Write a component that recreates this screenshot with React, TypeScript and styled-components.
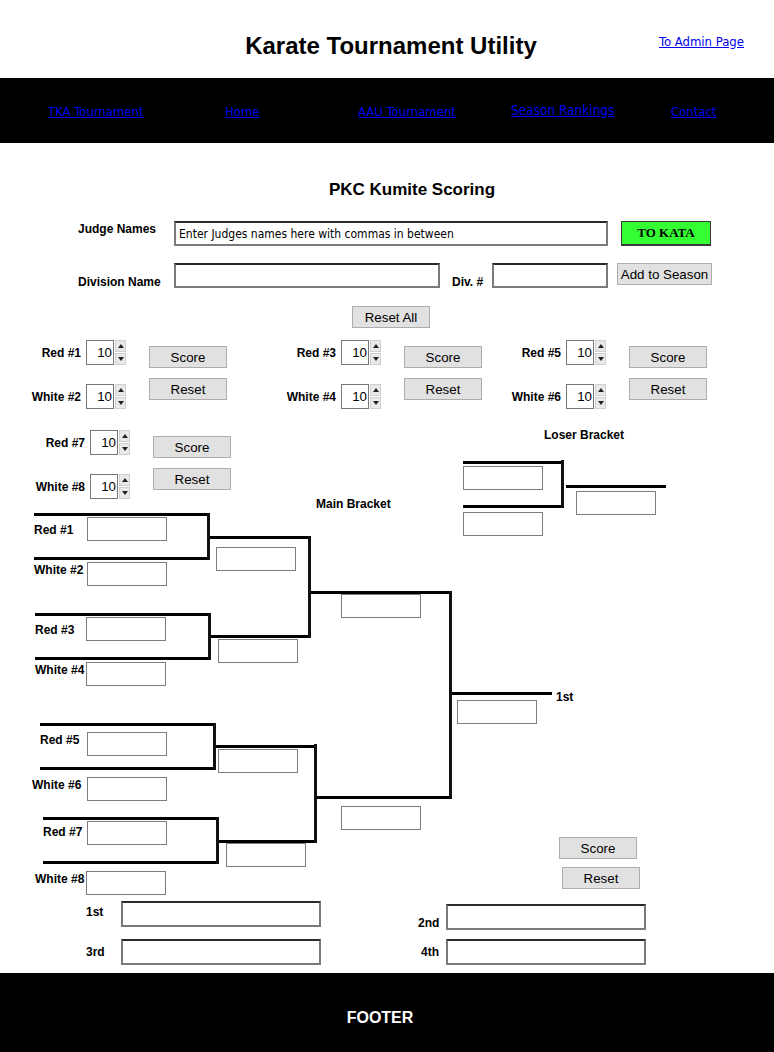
import styled, { createGlobalStyle } from "styled-components";

const GlobalStyle = createGlobalStyle`
  body {
    margin: 0;
    background: #fff;
    font-family: "Liberation Sans", Arial, sans-serif;
    color: #000;
  }
`;

const comic = `"Comic Sans MS", "Liberation Sans Narrow", "DejaVu Sans Condensed", sans-serif`;

// bracket geometry, in canvas coordinates
const hLines = [
  [463, 563, 42], [463, 563, 86], [566, 666, 66],
  [34, 208, 94], [34, 208, 138], [35, 209, 194], [35, 209, 238],
  [40, 214, 304], [40, 214, 348], [43, 217, 398], [43, 217, 442],
  [208, 309, 117], [209, 309, 216], [214, 316, 326], [217, 316, 421],
  [310, 450, 172], [316, 450, 377],
  [452, 552, 273],
];

const vLines = [
  [562, 41, 87], [208, 94, 139], [209, 194, 239], [214, 304, 349],
  [217, 398, 443], [309, 117, 217], [315, 325, 422], [450, 172, 378],
];

const slots = [
  [463, 46], [463, 92], [576, 71],
  [87, 97], [87, 142], [86, 197], [86, 242], [87, 312], [87, 357], [87, 401], [86, 451],
  [216, 127], [218, 219], [218, 329], [226, 423],
  [341, 174], [341, 386],
  [457, 280],
];

const labels: [string, number, number][] = [
  ["Loser Bracket", 544, 8],
  ["Main Bracket", 316, 77],
  ["Red #1", 34, 103],
  ["White #2", 34, 143],
  ["Red #3", 35, 203],
  ["White #4", 35, 243],
  ["Red #5", 40, 313],
  ["White #6", 32, 358],
  ["Red #7", 43, 405],
  ["White #8", 35, 452],
  ["1st", 556, 270],
];

const scoreGroups = [
  ["Red #1", "White #2"],
  ["Red #3", "White #4"],
  ["Red #5", "White #6"],
];

function Spinner() {
  return (
    <SpinBox>
      <SpinValue>10</SpinValue>
      <SpinArrows>
        <Arrow $dir="up" />
        <Arrow $dir="down" />
      </SpinArrows>
    </SpinBox>
  );
}

function ScoreGroup({ names, left = 0 }: { names: string[]; left?: number }) {
  return (
    <Group $left={left}>
      <SpinnerList>
        {names.map((n) => (
          <SpinnerRow key={n}>
            <CompetitorLabel>{n}</CompetitorLabel>
            <Spinner />
          </SpinnerRow>
        ))}
      </SpinnerList>
      <ButtonStack>
        <GrayButton $width={78}>Score</GrayButton>
        <GrayButton $width={78}>Reset</GrayButton>
      </ButtonStack>
    </Group>
  );
}

export default function App() {
  return (
    <>
      <GlobalStyle />
      <Header>
        <span />
        <Title>Karate Tournament Utility</Title>
        <AdminLink href="#">To Admin Page</AdminLink>
      </Header>
      <Nav>
        <NavLink href="#">TKA Tournament</NavLink>
        <NavLink href="#">Home</NavLink>
        <NavLink href="#">AAU Tournament</NavLink>
        <NavLink href="#" $big>Season Rankings</NavLink>
        <NavLink href="#">Contact</NavLink>
      </Nav>

      <Main>
        <FormTitle>PKC Kumite Scoring</FormTitle>

        <FormRow $align="flex-start">
          <FieldLabel $width={96} $shift={-1}>Judge Names</FieldLabel>
          <TextField $width={434} defaultValue="Enter Judges names here with commas in between" />
          <KataButton>TO KATA</KataButton>
        </FormRow>

        <FormRow $align="flex-end" $top={17}>
          <FieldLabel $width={96} $shift={1}>Division Name</FieldLabel>
          <TextField $width={266} />
          <FieldLabel $width={40} $shift={1} $gap={12}>Div. #</FieldLabel>
          <TextField $width={116} />
          <AddButton>Add to Season</AddButton>
        </FormRow>

        <ResetRow>
          <GrayButton $width={78}>Reset All</GrayButton>
        </ResetRow>

        <ScoreRow>
          {scoreGroups.map((g) => (
            <ScoreGroup key={g[0]} names={g} />
          ))}
        </ScoreRow>

        <BracketCanvas>
          <ScoreGroup names={["Red #7", "White #8"]} left={30} />
          {hLines.map(([x1, x2, y], i) => (
            <HLine key={"h" + i} $x={x1} $y={y - 1} $w={x2 - x1} />
          ))}
          {vLines.map(([x, y1, y2], i) => (
            <VLine key={"v" + i} $x={x - 1} $y={y1 - 1} $h={y2 - y1 + 2} />
          ))}
          {slots.map(([x, y], i) => (
            <Slot key={"s" + i} $x={x} $y={y} />
          ))}
          {labels.map(([t, x, y]) => (
            <BracketLabel key={t + x} $x={x} $y={y}>{t}</BracketLabel>
          ))}
          <CanvasButton $x={559} $y={417}>Score</CanvasButton>
          <CanvasButton $x={562} $y={447}>Reset</CanvasButton>
        </BracketCanvas>

        <Placements>
          <PlaceColumn $gap={12}>
            <PlaceRow $align="flex-start">
              <PlaceLabel $width={35} $top={4}>1st</PlaceLabel>
              <TextField $width={200} $height={26} />
            </PlaceRow>
            <PlaceRow $align="center">
              <PlaceLabel $width={35}>3rd</PlaceLabel>
              <TextField $width={200} $height={26} />
            </PlaceRow>
          </PlaceColumn>
          <PlaceColumn $gap={9} $top={3}>
            <PlaceRow $align="flex-end">
              <PlaceLabel $width={28}>2nd</PlaceLabel>
              <TextField $width={200} $height={26} />
            </PlaceRow>
            <PlaceRow $align="center">
              <PlaceLabel $width={28} $left={3}>4th</PlaceLabel>
              <TextField $width={200} $height={26} />
            </PlaceRow>
          </PlaceColumn>
        </Placements>
      </Main>

      <Footer>FOOTER</Footer>
    </>
  );
}

/* header + nav */
const Header = styled.header`
  height: 78px;
  display: grid;
  grid-template-columns: 1fr auto 1fr;
  align-items: start;
  padding-top: 30px;
  box-sizing: border-box;
`;

const Title = styled.h1`
  margin: 0 0 0 8px;
  font-size: 24px;
  line-height: 32px;
  font-weight: bold;
`;

const AdminLink = styled.a`
  justify-self: end;
  margin: 4px 30px 0 0;
  font-family: ${comic};
  font-size: 13px;
  line-height: 16px;
  color: #0000ee;
`;

const Nav = styled.nav`
  height: 65px;
  background: #000;
  display: grid;
  grid-template-columns: 177px 133px 153px 160px auto;
  align-items: center;
  padding-left: 48px;
  box-sizing: border-box;
`;

const NavLink = styled.a<{ $big?: boolean }>`
  justify-self: start;
  font-family: ${comic};
  font-size: ${(p) => (p.$big ? "13.5px" : "13px")};
  margin-top: ${(p) => (p.$big ? "-1px" : "1px")};
  color: #0000ee;
`;

/* form */
const Main = styled.main`
  display: flex;
  flex-direction: column;
`;

const FormTitle = styled.h2`
  margin: 38px 0 0 50px;
  text-align: center;
  font-size: 17px;
  line-height: 18px;
  font-weight: bold;
`;

const FormRow = styled.div<{ $align: string; $top?: number }>`
  display: flex;
  align-items: ${(p) => p.$align};
  padding-left: 78px;
  margin-top: ${(p) => p.$top ?? 22}px;
  height: 25px;
`;

const FieldLabel = styled.span<{ $width: number; $shift: number; $gap?: number }>`
  width: ${(p) => p.$width}px;
  margin-left: ${(p) => p.$gap ?? 0}px;
  font-size: 12px;
  font-weight: bold;
  line-height: 14px;
  white-space: nowrap;
  position: relative;
  top: ${(p) => p.$shift}px;
  padding-top: ${(p) => (p.$shift < 0 ? 2 : 0)}px;
`;

const TextField = styled.input<{ $width: number; $height?: number }>`
  box-sizing: border-box;
  width: ${(p) => p.$width}px;
  height: ${(p) => p.$height ?? 25}px;
  border: 2px solid;
  border-color: #2a2a2a #7a7a7a #7a7a7a #7a7a7a;
  padding: 0 3px;
  font-family: ${comic};
  font-size: 12px;
  color: #000;
  background: #fff;
  outline: none;
`;

const KataButton = styled.button`
  box-sizing: border-box;
  width: 90px;
  height: 25px;
  margin-left: 13px;
  background: #33ff33;
  border: 1px solid #3a3a3a;
  border-bottom-width: 2px;
  font-family: "Liberation Serif", "Times New Roman", serif;
  font-weight: bold;
  font-size: 13px;
  color: #000;
  padding: 0;
`;

const GrayButton = styled.button<{ $width: number }>`
  box-sizing: border-box;
  width: ${(p) => p.$width}px;
  height: 22px;
  padding: 0;
  background: #e1e1e1;
  border: 1px solid #adadad;
  font-family: "Liberation Sans", Arial, sans-serif;
  font-size: 13.33px;
  color: #000;
`;

const AddButton = styled(GrayButton).attrs({ $width: 95 })`
  margin-left: 9px;
  align-self: flex-start;
`;

const ResetRow = styled.div`
  display: flex;
  justify-content: center;
  padding-left: 8px;
  margin-top: 18px;
`;

/* score controls */
const ScoreRow = styled.div`
  display: grid;
  grid-template-columns: 255px 225px auto;
  padding-left: 26px;
  margin-top: 12px;
  height: 69px;
`;

const Group = styled.div<{ $left: number }>`
  display: flex;
  gap: 23px;
  margin-left: ${(p) => p.$left}px;
`;

const SpinnerList = styled.div`
  display: flex;
  flex-direction: column;
  gap: 19px;
`;

const SpinnerRow = styled.div`
  display: flex;
  align-items: center;
`;

const CompetitorLabel = styled.span`
  width: 60px;
  padding-right: 5px;
  box-sizing: border-box;
  text-align: right;
  font-size: 12px;
  font-weight: bold;
  white-space: nowrap;
`;

const SpinBox = styled.div`
  display: flex;
  height: 25px;
`;

const SpinValue = styled.div`
  box-sizing: border-box;
  width: 28px;
  height: 25px;
  border: 1px solid #767676;
  text-align: right;
  padding-right: 1px;
  font-size: 13.33px;
  line-height: 23px;
`;

const SpinArrows = styled.div`
  display: flex;
  flex-direction: column;
  width: 11px;
  margin-left: 1px;
  gap: 1px;
`;

const Arrow = styled.div<{ $dir: "up" | "down" }>`
  flex: 1;
  background: #e9e9e9;
  border: 1px solid #cfcfcf;
  display: flex;
  align-items: center;
  justify-content: center;
  &::after {
    content: "";
    border-left: 3px solid transparent;
    border-right: 3px solid transparent;
    ${(p) => (p.$dir === "up" ? "border-bottom: 4px solid #222;" : "border-top: 4px solid #222;")}
  }
`;

const ButtonStack = styled.div`
  display: flex;
  flex-direction: column;
  gap: 10px;
  margin-top: 6px;
`;

/* bracket diagram */
const BracketCanvas = styled.div`
  position: relative;
  height: 478px;
  margin-top: 11px;
  padding-top: 10px;
  box-sizing: border-box;
`;

const HLine = styled.div<{ $x: number; $y: number; $w: number }>`
  position: absolute;
  left: ${(p) => p.$x}px;
  top: ${(p) => p.$y}px;
  width: ${(p) => p.$w}px;
  height: 3px;
  background: #000;
`;

const VLine = styled.div<{ $x: number; $y: number; $h: number }>`
  position: absolute;
  left: ${(p) => p.$x}px;
  top: ${(p) => p.$y}px;
  width: 3px;
  height: ${(p) => p.$h}px;
  background: #111;
`;

const Slot = styled.div<{ $x: number; $y: number }>`
  position: absolute;
  left: ${(p) => p.$x}px;
  top: ${(p) => p.$y}px;
  width: 80px;
  height: 24px;
  box-sizing: border-box;
  border: 1px solid #7d7d7d;
  background: #fff;
`;

const BracketLabel = styled.span<{ $x: number; $y: number }>`
  position: absolute;
  left: ${(p) => p.$x}px;
  top: ${(p) => p.$y}px;
  font-size: 12px;
  line-height: 14px;
  font-weight: bold;
  white-space: nowrap;
`;

const CanvasButton = styled(GrayButton).attrs({ $width: 78 })<{ $x: number; $y: number }>`
  position: absolute;
  left: ${(p) => p.$x}px;
  top: ${(p) => p.$y}px;
`;

/* placements */
const Placements = styled.div`
  display: grid;
  grid-template-columns: 332px auto;
  padding-left: 86px;
  margin-top: 3px;
  height: 64px;
`;

const PlaceColumn = styled.div<{ $gap: number; $top?: number }>`
  display: flex;
  flex-direction: column;
  gap: ${(p) => p.$gap}px;
  padding-top: ${(p) => p.$top ?? 0}px;
`;

const PlaceRow = styled.div<{ $align: string }>`
  display: flex;
  align-items: ${(p) => p.$align};
`;

const PlaceLabel = styled.span<{ $width: number; $top?: number; $left?: number }>`
  width: ${(p) => p.$width}px;
  font-size: 12px;
  font-weight: bold;
  line-height: 14px;
  padding-top: ${(p) => p.$top ?? 0}px;
  padding-left: ${(p) => p.$left ?? 0}px;
  box-sizing: border-box;
`;

const Footer = styled.footer`
  margin-top: 8px;
  height: 79px;
  background: #000;
  color: #fff;
  text-align: center;
  font-weight: bold;
  font-size: 16px;
  line-height: 18px;
  padding: 36px 14px 0 0;
  box-sizing: border-box;
`;
